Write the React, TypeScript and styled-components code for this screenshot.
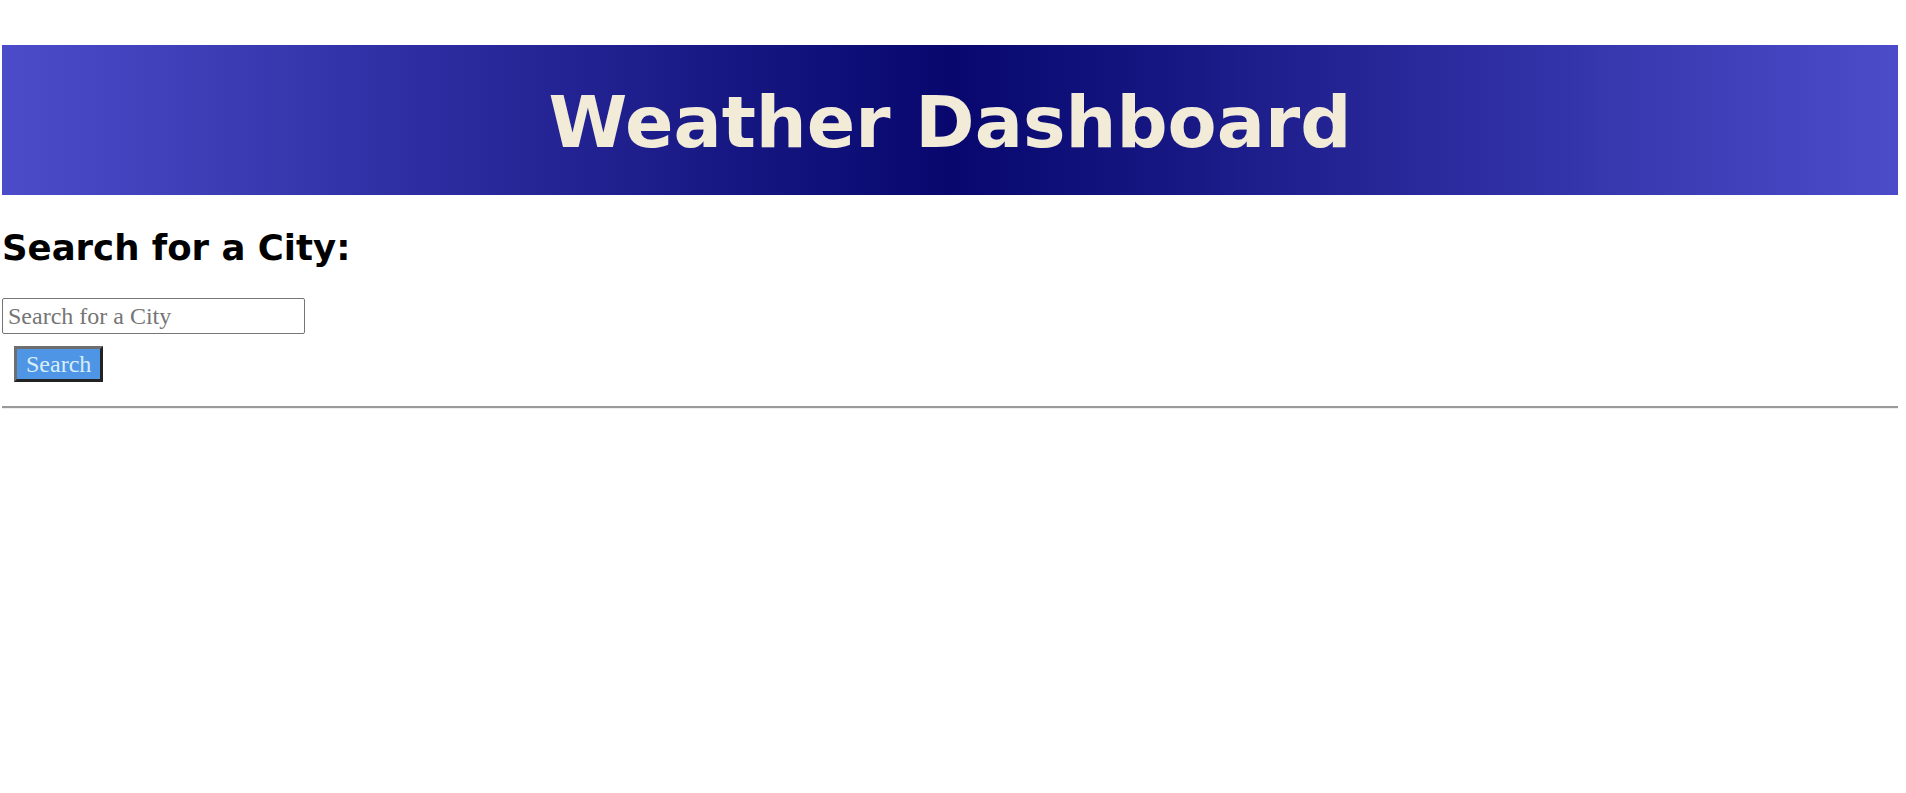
import React from "react";
import styled, { createGlobalStyle } from "styled-components";

const GlobalStyle = createGlobalStyle`
  html, body {
    margin: 0;
    padding: 0;
    background: #ffffff;
  }
  body {
    font-family: "Liberation Serif", "Times New Roman", serif;
  }
`;

const Page = styled.div`
  display: flex;
  flex-direction: column;
  align-items: stretch;
  padding: 45px 8px 0 2px;
`;

const Header = styled.header`
  height: 150px;
  box-sizing: border-box;
  padding-top: 36px;
  background: linear-gradient(to right, #4c4cca 0%, #07076e 50%, #4c4cca 100%);
  text-align: center;
`;

const Title = styled.h1`
  margin: 0;
  font-family: Verdana, "DejaVu Sans", sans-serif;
  font-weight: 700;
  font-size: 71.5px;
  line-height: normal;
  color: #f2ebd8;
`;

const SearchHeading = styled.h2`
  margin: 32px 0 30px 0;
  font-family: Verdana, "DejaVu Sans", sans-serif;
  font-weight: 700;
  font-size: 35.5px;
  line-height: normal;
  color: #000000;
`;

const SearchForm = styled.form`
  display: flex;
  flex-direction: column;
  align-items: flex-start;
  gap: 12px;
`;

const CityInput = styled.input`
  box-sizing: border-box;
  width: 303px;
  height: 36px;
  margin: 0;
  padding: 1px 5px;
  border: 1px solid #767676;
  border-radius: 2px;
  font-family: "Liberation Serif", "Times New Roman", serif;
  font-size: 24px;
  color: #000;
  background: #fff;
  &::placeholder {
    color: #757575;
  }
`;

const SearchButton = styled.button`
  box-sizing: border-box;
  height: 36px;
  margin: 0 0 0 12px;
  padding: 0 9px;
  border-width: 3px;
  border-style: solid;
  border-color: #6e6e6e #222222 #222222 #6e6e6e;
  background: #4f95e6;
  color: #d8eef8;
  font-family: "Liberation Serif", "Times New Roman", serif;
  font-size: 24px;
  line-height: 1;
  cursor: pointer;
`;

const Divider = styled.hr`
  margin: 24px 0 0 0;
  height: 0;
  border: none;
  border-top: 2px solid #9a9a9a;
  border-bottom: 1px solid #eeeeee;
`;

export default function App() {
  return (
    <>
      <GlobalStyle />
      <Page>
        <Header>
          <Title>Weather Dashboard</Title>
        </Header>
        <SearchHeading>Search for a City:</SearchHeading>
        <SearchForm onSubmit={(e) => e.preventDefault()}>
          <CityInput type="text" placeholder="Search for a City" />
          <SearchButton type="submit">Search</SearchButton>
        </SearchForm>
        <Divider />
      </Page>
    </>
  );
}
